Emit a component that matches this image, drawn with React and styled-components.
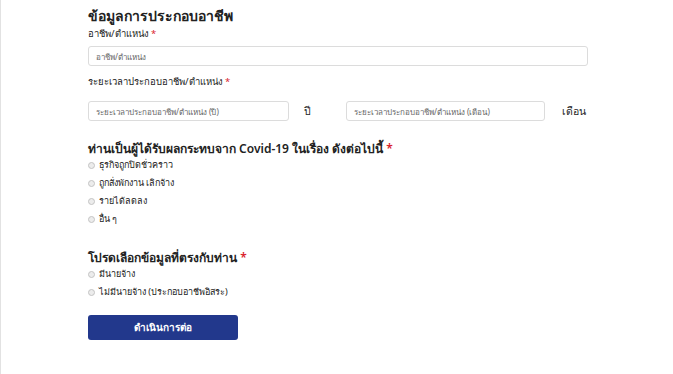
import React from 'react';
import styled, { createGlobalStyle } from 'styled-components';

const GlobalStyle = createGlobalStyle`
  html, body {
    margin: 0;
    padding: 0;
    background: #fff;
  }
  body {
    font-family: "Noto Sans", "Open Sans", sans-serif;
    color: #333;
  }
`;

const Page = styled.div`
  width: 673px;
  height: 374px;
  box-sizing: border-box;
  border-left: 1px solid #e2e2e2;
  padding: 6px 0 0 87px;
  overflow: hidden;
`;

const Form = styled.div`
  width: 500px;
  display: flex;
  flex-direction: column;
`;

const Title = styled.div`
  font-size: ${(p) => p.$size || 14}px;
  font-weight: 600;
  color: #222;
  line-height: 20px;
  margin-top: ${(p) => p.$top || 0}px;
`;

const Label = styled.div`
  font-size: 9.5px;
  color: #222;
  line-height: 16px;
  margin-top: ${(p) => p.$top || 0}px;
`;

const Star = styled.span`
  color: #d9232e;
`;

const Input = styled.input`
  box-sizing: border-box;
  flex: none;
  width: ${(p) => p.$width || '100%'};
  height: 20px;
  border: 1px solid #dcdcdc;
  border-radius: 3px;
  padding: 0 7px;
  font-family: inherit;
  font-size: 8px;
  outline: none;
  margin-top: ${(p) => p.$top || 0}px;
  &::placeholder {
    color: #666;
  }
`;

const DurationRow = styled.div`
  display: flex;
  align-items: center;
  margin-top: 11px;
`;

const Unit = styled.span`
  flex: none;
  font-size: 10.5px;
  color: #222;
  width: ${(p) => p.$width}px;
  padding-left: ${(p) => p.$pad}px;
  box-sizing: border-box;
`;

const Options = styled.div`
  display: flex;
  flex-direction: column;
  margin-top: -3px;
`;

const Option = styled.label`
  display: flex;
  align-items: center;
  gap: 4px;
  height: 18px;
  font-size: 9px;
  color: #222;
`;

const Radio = styled.span`
  width: 5px;
  height: 5px;
  border-radius: 50%;
  border: 1px solid #c4c4c4;
  background: #ececec;
  flex: none;
`;

const Button = styled.button`
  margin-top: 14px;
  width: 150px;
  height: 25px;
  border: none;
  border-radius: 3px;
  background: #22388c;
  color: #fff;
  font-family: inherit;
  font-size: 10px;
  font-weight: 700;
  cursor: pointer;
`;

const impacts = ['ธุรกิจถูกปิดชั่วคราว', 'ถูกสั่งพักงาน เลิกจ้าง', 'รายได้ลดลง', 'อื่น ๆ'];
const employment = ['มีนายจ้าง', 'ไม่มีนายจ้าง (ประกอบอาชีพอิสระ)'];

const App = () => {
  return (
    <>
      <GlobalStyle />
      <Page>
        <Form>
          <Title>ข้อมูลการประกอบอาชีพ</Title>
          <Label>
            อาชีพ/ตำแหน่ง <Star>*</Star>
          </Label>
          <Input $top={4} placeholder="อาชีพ/ตำแหน่ง" />
          <Label $top={8}>
            ระยะเวลาประกอบอาชีพ/ตำแหน่ง <Star>*</Star>
          </Label>
          <DurationRow>
            <Input $width="201px" placeholder="ระยะเวลาประกอบอาชีพ/ตำแหน่ง (ปี)" />
            <Unit $width={57} $pad={15}>ปี</Unit>
            <Input $width="199px" placeholder="ระยะเวลาประกอบอาชีพ/ตำแหน่ง (เดือน)" />
            <Unit $width={60} $pad={17}>เดือน</Unit>
          </DurationRow>
          <Title $top={18} $size={12}>
            ท่านเป็นผู้ได้รับผลกระทบจาก Covid-19 ในเรื่อง ดังต่อไปนี้ <Star>*</Star>
          </Title>
          <Options>
            {impacts.map((item) => (
              <Option key={item}>
                <Radio />
                {item}
              </Option>
            ))}
          </Options>
          <Title $top={20} $size={12}>
            โปรดเลือกข้อมูลที่ตรงกับท่าน <Star>*</Star>
          </Title>
          <Options>
            {employment.map((item) => (
              <Option key={item}>
                <Radio />
                {item}
              </Option>
            ))}
          </Options>
          <Button>ดำเนินการต่อ</Button>
        </Form>
      </Page>
    </>
  );
};

export default App;
